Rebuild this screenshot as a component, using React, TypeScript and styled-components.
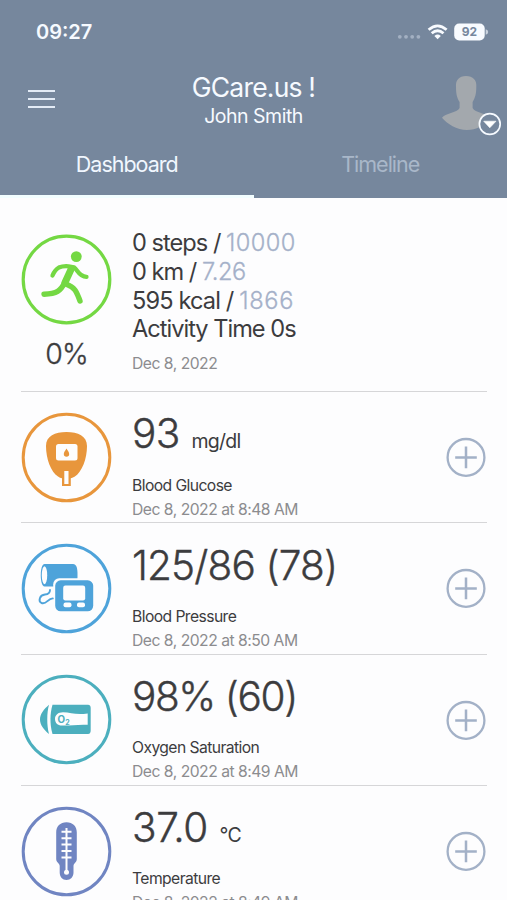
import React from "react";
import styled, { createGlobalStyle } from "styled-components";

const GlobalStyle = createGlobalStyle`
  html, body { margin: 0; padding: 0; background: #fdfdfe; }
  body { overflow: hidden; }
  * { box-sizing: border-box; }
`;

const Screen = styled.div`
  width: 507px;
  height: 900px;
  overflow: hidden;
  background: #fdfdfe;
  color: #3c3c3e;
  font-family: Inter, "Liberation Sans", sans-serif;
`;

const Header = styled.header`
  height: 197.5px;
  background: #76879d;
  color: #f6faff;
  display: flex;
  flex-direction: column;
`;

const StatusBar = styled.div`
  height: 64px;
  padding: 0 18px 0 36px;
  display: flex;
  align-items: center;
  justify-content: space-between;
`;

const Clock = styled.span`
  font-size: 20px;
  font-weight: 600;
  letter-spacing: 0;
`;

const StatusIcons = styled.div`
  display: flex;
  align-items: center;
`;

const TitleBar = styled.div`
  height: 69px;
  display: grid;
  grid-template-columns: 100px 1fr 100px;
`;

const MenuButton = styled.button`
  align-self: start;
  margin: 25.5px 0 0 28px;
  width: 27px;
  height: 20px;
  padding: 0;
  border: 0;
  background: none;
  display: flex;
  flex-direction: column;
  gap: 6.2px;
`;

const MenuLine = styled.span`
  height: 2px;
  width: 100%;
  background: #e3ebf6;
`;

const Titles = styled.div`
  display: flex;
  flex-direction: column;
  align-items: center;
  padding-top: 7px;
`;

const AppName = styled.div`
  font-size: 26.5px;
  line-height: 32px;
  letter-spacing: -0.8px;
  white-space: nowrap;
`;

const UserName = styled.div`
  font-size: 19.5px;
  line-height: 26px;
  letter-spacing: -0.5px;
`;

const Avatar = styled.svg`
  justify-self: end;
  margin: 8px 4px 0 0;
`;

const Tabs = styled.nav`
  flex: 1;
  display: flex;
`;

const Tab = styled.div<{ $active?: boolean }>`
  flex: 1;
  padding-top: 18px;
  text-align: center;
  font-size: 21.5px;
  line-height: 26px;
  letter-spacing: -1px;
  color: ${(p) => (p.$active ? "#f1f7ff" : "#a9b7c9")};
  border-bottom: ${(p) => (p.$active ? "3px solid #f2feff" : "0")};
`;

const Content = styled.main`
  padding: 0 20px 0 21px;
`;

const Activity = styled.section`
  height: 194.5px;
  border-bottom: 1.5px solid #d6d6d8;
  display: grid;
  grid-template-columns: 111px 1fr;
  padding-top: 31.5px;
`;

const ActivityBadge = styled.div`
  width: 91px;
  padding-top: 5px;
  display: flex;
  flex-direction: column;
  align-items: center;
`;

const Percent = styled.div`
  margin-top: 12px;
  font-size: 28.5px;
  line-height: 34px;
  font-weight: 300;
  letter-spacing: -0.8px;
  -webkit-text-stroke: 0.3px currentColor;
`;

const Stat = styled.div<{ $spacing: number }>`
  font-size: 23.6px;
  line-height: 28.75px;
  letter-spacing: ${(p) => p.$spacing}px;
  white-space: pre;
`;

const Goal = styled.span<{ $spacing: number }>`
  color: #a5b1c9;
  font-weight: 300;
  letter-spacing: ${(p) => p.$spacing}px;
  -webkit-text-stroke: 0.3px currentColor;
`;

const DateText = styled.div<{ $top?: number }>`
  margin-top: ${(p) => p.$top ?? 0}px;
  font-size: 15.7px;
  line-height: 23px;
  letter-spacing: -0.5px;
  color: #8c8c8f;
`;

const Row = styled.section`
  height: 131.3px;
  border-bottom: 1.5px solid #d6d6d8;
  display: grid;
  grid-template-columns: 111px 1fr 41px;
  align-items: center;
`;

const Reading = styled.div`
  align-self: start;
  padding-top: 18.3px;
`;

const ValueLine = styled.div`
  height: 48px;
  display: flex;
  align-items: baseline;
  gap: 11.5px;
`;

const Value = styled.span<{ $spacing: number }>`
  font-size: 40.5px;
  line-height: 48px;
  font-weight: 300;
  letter-spacing: ${(p) => p.$spacing}px;
  -webkit-text-stroke: 0.4px currentColor;
`;

const Unit = styled.span`
  font-size: 19.5px;
  font-weight: 400;
  letter-spacing: -0.7px;
`;

const Label = styled.div`
  margin-top: 15.3px;
  font-size: 15.7px;
  line-height: 24px;
  letter-spacing: -0.58px;
`;

const AddButton = styled.button`
  width: 40px;
  height: 40px;
  padding: 0;
  border: 0;
  background: none;
  display: block;
`;

const Ring = ({ color, width = 3, children }: { color: string; width?: number; children: React.ReactNode }) => (
  <svg width="91" height="91" viewBox="0 0 91 91">
    <circle cx="45.5" cy="45.5" r="43.3" fill="none" stroke={color} strokeWidth={width} />
    {children}
  </svg>
);

const GREEN = "#74d843";
const ORANGE = "#e8963c";
const BLUE = "#4ea3da";
const TEAL = "#4cafbe";
const INDIGO = "#7085c2";
const PAPER = "#fdfdfe";

const Runner = () => (
  <Ring color={GREEN} width={3.2}>
    <circle cx="55.3" cy="22.6" r="5.4" fill={GREEN} />
    <g fill="none" stroke={GREEN} strokeLinecap="round" strokeLinejoin="round">
      <path d="M31.5 41.5 Q34 35.5 37.8 33.6 Q42 31.8 47.5 32.3 L53 33.3 C57 36 57.5 42.5 65.5 42.8" strokeWidth="4.3" />
      <path d="M50 35.5 L44 48.5" strokeWidth="7" />
      <path d="M43.5 49 C39.5 57 36 59.5 23 60.2" strokeWidth="5.4" />
      <path d="M45 50 C55 54 55.5 58 59 67" strokeWidth="5.4" />
    </g>
  </Ring>
);

const Glucose = () => (
  <Ring color={ORANGE}>
    <path d="M45.5 20 C57 20 66 24 66 34 C66 47 61 60 53.5 64.8 Q51 66.2 49.8 66.2 V74 H41 V66.2 Q39 66 37 64.5 C30 60 25 47 25 34 C25 24 34 20 45.5 20Z" fill={ORANGE} />
    <rect x="35" y="32" width="21.5" height="16.5" rx="2.5" fill={PAPER} />
    <path d="M45.5 36.5 C47 39 48.2 40.3 48.2 42 A2.7 2.7 0 0 1 42.8 42 C42.8 40.3 44 39 45.5 36.5Z" fill={ORANGE} />
    <rect x="43.3" y="59" width="4.2" height="13" fill={PAPER} />
  </Ring>
);

const Pressure = () => (
  <Ring color={BLUE}>
    <path d="M23.5 21 H52 C56 21 56.5 26 56.5 32 C56.5 39 56 43.5 52 43.5 H23.5 C18.5 43.5 18.5 21 23.5 21Z" fill={BLUE} />
    <ellipse cx="23.5" cy="32.2" rx="2.7" ry="9" fill={PAPER} />
    <rect x="32.2" y="35.3" width="42" height="35" rx="6" fill={PAPER} />
    <rect x="34.2" y="37.3" width="38" height="31" rx="5.5" fill={BLUE} />
    <rect x="42.2" y="42.5" width="22" height="15" rx="2.2" fill={PAPER} />
    <rect x="42.5" y="59.5" width="8" height="4.7" rx="2" fill={PAPER} />
    <rect x="56" y="59.5" width="8" height="4.7" rx="2" fill={PAPER} />
    <path d="M29 47 C29 50.5 26.5 51.3 24 51.5 C18.5 52 17 58 20.5 60 C25.5 62 26.5 55.5 31.8 55.4" fill="none" stroke={BLUE} strokeWidth="1.9" strokeLinecap="round" />
  </Ring>
);

const OxygenText = styled.text`
  font-family: Inter, "Liberation Sans", sans-serif;
  font-weight: 700;
  fill: ${TEAL};
`;

const Oxygen = () => (
  <Ring color={TEAL}>
    <path d="M28 30.7 C23 35 19 40 19 45.5 C19 51 23 56 28 60 C25.7 51 25.7 39 28 30.7Z" fill={TEAL} />
    <path d="M31.5 30.7 H67 C69 30.7 69.7 32 69.7 34 V56 C69.7 58.5 69 60 67 60 H31.5 C28.8 51 28.8 39.5 31.5 30.7Z" fill={TEAL} />
    <path d="M42 38.3 C50 38.4 55 41.4 66.7 39.4 V50.8 C56 50.3 51 51.7 41 51.6 C36.5 51.4 34 48.8 34 45 C34 41.2 37 38.3 42 38.3Z" fill={PAPER} />
    <OxygenText x="36.6" y="48.8" fontSize="9.8">O</OxygenText>
    <OxygenText x="44.3" y="50.6" fontSize="7">2</OxygenText>
  </Ring>
);

const Thermometer = () => (
  <Ring color={INDIGO}>
    <path d="M45.5 16.3 C51.8 16.3 55.8 20.5 55.8 26.5 V53 C55.8 56.5 52.5 57 52.5 60 V66.5 C52.5 71 49.5 74 45.5 74 C41.5 74 38.7 71 38.7 66.5 V60 C38.7 57 35.2 56.5 35.2 53 V26.5 C35.2 20.5 39.2 16.3 45.5 16.3Z" fill={INDIGO} />
    <path d="M45.5 22 V65 M40.5 25.8 H50.5 M40.5 32.2 H50.5 M40.5 38.6 H50.5 M40.5 45 H50.5 M40.5 51.4 H50.5" stroke={PAPER} strokeWidth="2" fill="none" />
    <circle cx="45.5" cy="66.3" r="2.5" fill={PAPER} />
  </Ring>
);

const Plus = () => (
  <AddButton aria-label="Add reading">
    <svg width="40" height="40" viewBox="0 0 40 40" fill="none" stroke="#a3b1c7">
      <circle cx="20" cy="20.4" r="18.4" strokeWidth="2.3" />
      <path d="M20 9.6V31.2M9.2 20.4H30.8" strokeWidth="2.5" />
    </svg>
  </AddButton>
);

const stats = [
  { text: "0 steps / ", goal: "10000", spacing: -0.98, goalSpacing: 0.4 },
  { text: "0 km / ", goal: "7.26", spacing: -1, goalSpacing: -0.4 },
  { text: "595 kcal / ", goal: "1866", spacing: -0.88, goalSpacing: 0.7 },
  { text: "Activity Time 0s", goal: "", spacing: -1, goalSpacing: 0 },
];

const readings = [
  { icon: <Glucose />, value: "93", unit: "mg/dl", spacing: -0.5, label: "Blood Glucose", date: "Dec 8, 2022 at 8:48 AM" },
  { icon: <Pressure />, value: "125/86 (78)", unit: "", spacing: -0.85, label: "Blood Pressure", date: "Dec 8, 2022 at 8:50 AM" },
  { icon: <Oxygen />, value: "98% (60)", unit: "", spacing: -1.4, label: "Oxygen Saturation", date: "Dec 8, 2022 at 8:49 AM" },
  { icon: <Thermometer />, value: "37.0", unit: "°C", spacing: -0.4, label: "Temperature", date: "Dec 8, 2022 at 8:49 AM" },
];

const BatteryText = styled.text`
  font-family: Inter, "Liberation Sans", sans-serif;
  font-weight: 700;
  fill: #76879d;
`;

export default function App() {
  return (
    <Screen>
      <GlobalStyle />
      <Header>
        <StatusBar>
          <Clock>09:27</Clock>
          <StatusIcons>
            <svg width="92" height="20" viewBox="0 0 92 20">
              <g fill="#a3b0c2">
                <circle cx="2.8" cy="14.8" r="1.9" />
                <circle cx="9" cy="14.8" r="1.9" />
                <circle cx="15.2" cy="14.8" r="1.9" />
                <circle cx="21.4" cy="14.8" r="1.9" />
              </g>
              <g fill="none" stroke="#f8fbff" strokeWidth="2.8">
                <path d="M31.6 7.8 Q40.6 0 49.6 7.8" />
                <path d="M34.7 11.3 Q40.6 6.1 46.5 11.3" />
              </g>
              <path d="M37.4 13.9 Q40.6 11.2 43.8 13.9 L40.6 17.3Z" fill="#f8fbff" />
              <rect x="57.2" y="1.6" width="30.5" height="16.8" rx="5" fill="#f8fbff" />
              <path d="M88.7 7.2 Q91.2 7.8 91.2 10 T88.7 12.8Z" fill="#c9d2de" />
              <BatteryText x="72.4" y="14.2" fontSize="12" textAnchor="middle">92</BatteryText>
            </svg>
          </StatusIcons>
        </StatusBar>
        <TitleBar>
          <MenuButton aria-label="Menu">
            <MenuLine />
            <MenuLine />
            <MenuLine />
          </MenuButton>
          <Titles>
            <AppName>GCare.us !</AppName>
            <UserName>John Smith</UserName>
          </Titles>
          <Avatar width="62" height="66" viewBox="0 0 62 66">
            <path d="M25 4 C32 4 36 8 35.3 15 C35.3 22 34 26 31.6 30 V36 C34 41 46 41 48.5 46.5 C44 54 35 58 26 58 C16 58 6 52 1 45.8 C4 41 16 41 18.6 36 V30 C16 26 15 22 15 15 C14.5 8 18 4 25 4Z" fill="#a3a8ad" />
            <circle cx="48.8" cy="52" r="10.4" fill="#76879d" stroke="#f6faff" strokeWidth="1.7" />
            <path d="M42.7 49.2 H55 L48.8 55.8Z" fill="#fff" stroke="#fff" strokeWidth="0.6" />
          </Avatar>
        </TitleBar>
        <Tabs>
          <Tab $active>Dashboard</Tab>
          <Tab>Timeline</Tab>
        </Tabs>
      </Header>
      <Content>
        <Activity>
          <ActivityBadge>
            <Runner />
            <Percent>0%</Percent>
          </ActivityBadge>
          <div>
            {stats.map((s) => (
              <Stat key={s.text} $spacing={s.spacing}>
                {s.text}
                {s.goal && <Goal $spacing={s.goalSpacing}>{s.goal}</Goal>}
              </Stat>
            ))}
            <DateText $top={7.5}>Dec 8, 2022</DateText>
          </div>
        </Activity>
        {readings.map((r) => (
          <Row key={r.label}>
            {r.icon}
            <Reading>
              <ValueLine>
                <Value $spacing={r.spacing}>{r.value}</Value>
                {r.unit && <Unit>{r.unit}</Unit>}
              </ValueLine>
              <Label>{r.label}</Label>
              <DateText>{r.date}</DateText>
            </Reading>
            <Plus />
          </Row>
        ))}
      </Content>
    </Screen>
  );
}
